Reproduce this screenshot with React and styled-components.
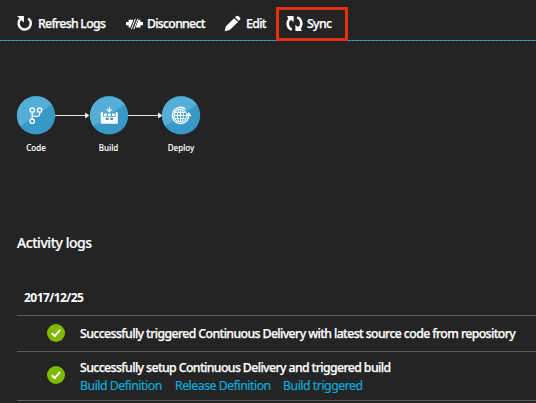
import React from "react";
import styled, { createGlobalStyle } from "styled-components";

const GlobalStyle = createGlobalStyle`
  * { box-sizing: border-box; }
  body { margin: 0; background: #242424; overflow: hidden; }
`;

const Page = styled.main`
  width: 536px;
  height: 403px;
  background: #242424;
  color: #fff;
  font-family: "Noto Sans", "Open Sans", sans-serif;
  font-size: 12.3px;
  overflow: hidden;
`;

const Toolbar = styled.header`
  height: 41px;
  padding: 7px 0 0 16px;
  display: flex;
  align-items: flex-start;
  background: repeating-linear-gradient(90deg, #36a0bd 0 3px, #23738a 3px 4px) 0 40px / 100% 1px no-repeat;
`;

const Command = styled.button`
  display: flex;
  align-items: center;
  flex: none;
  gap: ${(p) => p.$gap || 5}px;
  width: ${(p) => p.$width}px;
  height: 34px;
  padding: 0 0 1px;
  border: 0;
  background: none;
  color: inherit;
  font: inherit;
  font-weight: 500;
  -webkit-text-stroke: 0.25px currentColor;
  white-space: nowrap;
  letter-spacing: ${(p) => p.$track}px;
  svg { flex: none; }
`;

const SyncCommand = styled(Command)`
  border: 3px solid #e3300f;
  border-radius: 1px;
  padding: 0 0 1px 7px;
`;

const Pipeline = styled.section`
  height: 183px;
  padding: 54px 0 0 16px;
  display: flex;
  align-items: flex-start;
`;

const Stage = styled.div`
  width: 40px;
  display: flex;
  flex-direction: column;
  align-items: center;
  flex: none;
`;

const StageName = styled.span`
  margin-top: 7px;
  font-size: 8px;
  font-weight: 500;
  line-height: 12px;
  -webkit-text-stroke: 0.1px currentColor;
`;

const Connector = styled.svg`
  flex: none;
  margin: 15px -1.3px 0 -1px;
`;

const Heading = styled.h1`
  margin: 0 0 0 17px;
  height: 62px;
  line-height: 38px;
  font-size: 14px;
  font-weight: 500;
  letter-spacing: -0.45px;
  -webkit-text-stroke: 0.2px currentColor;
`;

const Logs = styled.section`
  margin-left: 17px;
`;

const LogDate = styled.h2`
  margin: 0;
  height: 29px;
  padding: 3px 0 0 7px;
  font-size: 12px;
  line-height: 18px;
  font-weight: 700;
  letter-spacing: -0.55px;
`;

const LogRow = styled.article`
  height: ${(p) => p.$height}px;
  padding-left: 30px;
  display: flex;
  align-items: center;
  gap: 15px;
  border-top: 1px solid #5b5b5b;
  svg { flex: none; margin-top: -2px; }
`;

const LastRow = styled(LogRow)`
  border-bottom: 1px solid #5b5b5b;
`;

const Details = styled.div`
  padding-top: 2px;
`;

const Message = styled.p`
  margin: 0;
  line-height: 18px;
  font-weight: 500;
  white-space: nowrap;
  letter-spacing: -0.61px;
  -webkit-text-stroke: 0.25px currentColor;
`;

const Links = styled.nav`
  display: flex;
  height: 18px;
`;

const LogLink = styled.a`
  width: ${(p) => p.$width}px;
  flex: none;
  color: #0fabda;
  line-height: 18px;
  white-space: nowrap;
  letter-spacing: -0.48px;
  -webkit-text-stroke: 0.2px currentColor;
`;

const RefreshIcon = () => (
  <svg width="17" height="17" viewBox="0 0 17 17" fill="none">
    <path d="M12.2 3.4A6.1 6.1 0 1 1 3.9 4.6" stroke="#fff" strokeWidth="2.4" />
    <path d="M1.1 1h6.8v6.5L5.4 5.2 3.2 6.6 3.5 3.3z" fill="#fff" />
  </svg>
);

const DisconnectIcon = () => (
  <svg width="17" height="12" viewBox="0 0 17 12">
    <path d="M0 4h2.6V1.8H7.4L4.4 9.4H2.6V7.2H0zM17 4h-2.6V1.8h-1.8L9.6 9.4h4.8V7.2H17z" fill="#fff" />
    <path d="M5.4 11.2 9.4.8M7.8 11.2l4-10.4" stroke="#fff" strokeWidth="1" />
  </svg>
);

const EditIcon = () => (
  <svg width="17" height="17" viewBox="0 0 17 17" fill="#fff">
    <path d="M.6 16.2l1.3-4.9 8.2-8.1 4 3.8-8.4 7.9zM11 2.3l1.4-1.2q1.1-.8 2.1.1L16 2.6q.9 1 0 2L14.9 6z" />
  </svg>
);

const SyncIcon = () => (
  <svg width="17" height="17" viewBox="0 0 17 17" fill="none">
    <path d="M5.8 14.7A6.4 6.4 0 0 1 4.4 3.5M11.2 2.3a6.4 6.4 0 0 1 1.4 11.2" stroke="#fff" strokeWidth="2.5" />
    <path d="M1.2 1h6.4v6.3L5.3 5 3 6.1zM15.8 16H9.4V9.7l2.3 2.2 2.3-1z" fill="#fff" />
  </svg>
);

const StageDisc = ({ children }) => (
  <svg width="40" height="40" viewBox="0 0 40 40">
    <circle cx="20" cy="20.3" r="19.2" fill="#3999c6" />
    <path d="M4.2 31.2A19.2 19.2 0 0 1 35.8 9.4z" fill="#55aed6" />
    {children}
  </svg>
);

const CodeGlyph = () => (
  <g fill="none" stroke="#fff" strokeWidth="1.3">
    <circle cx="16.2" cy="15" r="2.2" />
    <circle cx="23.6" cy="15" r="2.2" />
    <circle cx="16.2" cy="26.2" r="2.2" />
    <path d="M16.2 17.3v6.6M23.6 17.3v2.2q0 1.8-1.8 1.8h-5.6" />
  </g>
);

const BuildGlyph = () => (
  <g>
    <path d="M11.8 17.2H14v4.5h12.6v-4.5h2.2v11.5h-17z" fill="#fff" />
    <path d="M15 18.6h2.8v2.5H15zM19 18.6h2.8v2.5H19zM23 18.6h2.8v2.5H23z" fill="#fff" />
    <path d="M16.8 22.8h2.8v2.3h-2.8zM21.2 22.8H24v2.3h-2.8z" fill="#3999c6" />
    <path d="M20.3 12v4.2M17.8 14.1l2.5 2.5 2.5-2.5" fill="none" stroke="#fff" strokeWidth="1.1" />
  </g>
);

const DeployGlyph = () => (
  <g fill="none" stroke="#fff">
    <g strokeWidth="1">
      <circle cx="19.4" cy="20.5" r="6.4" />
      <ellipse cx="19.4" cy="20.5" rx="3" ry="6.4" />
      <path d="M19.4 14.1v12.8M13 20.5h12.8M14 17.4h10.8M14 23.6h10.8" />
    </g>
    <path d="M24.4 14A8.1 8.1 0 1 0 27.6 20.5" strokeWidth="1.4" />
    <path d="M24.8 21.2 27.8 17l2.8 4.2z" fill="#fff" stroke="none" />
  </g>
);

const Arrow = () => (
  <Connector width="34.8" height="10" viewBox="0 0 34.8 10">
    <path d="M0 5.5h32" stroke="#e5e5e5" />
    <path d="M30.2 2.6v5.8l4-2.9z" fill="#fff" />
  </Connector>
);

const SuccessIcon = () => (
  <svg width="18" height="18" viewBox="0 0 18 18">
    <circle cx="9" cy="9" r="9" fill="#7fba00" />
    <path d="M4.8 9.2 7.7 12l5.4-6.2" fill="none" stroke="#fff" strokeWidth="1.9" />
  </svg>
);

export default function App() {
  return (
    <Page>
      <GlobalStyle />
      <Toolbar>
        <Command $width={110} $track={-0.72}><RefreshIcon />Refresh Logs</Command>
        <Command $width={98} $gap={4} $track={-0.74}><DisconnectIcon />Disconnect</Command>
        <Command $width={52} $track={-0.65}><EditIcon />Edit</Command>
        <SyncCommand $width={72} $gap={4} $track={-0.65}><SyncIcon />Sync</SyncCommand>
      </Toolbar>
      <Pipeline>
        <Stage><StageDisc><CodeGlyph /></StageDisc><StageName>Code</StageName></Stage>
        <Arrow />
        <Stage><StageDisc><BuildGlyph /></StageDisc><StageName>Build</StageName></Stage>
        <Arrow />
        <Stage><StageDisc><DeployGlyph /></StageDisc><StageName>Deploy</StageName></Stage>
      </Pipeline>
      <Heading>Activity logs</Heading>
      <Logs>
        <LogDate>2017/12/25</LogDate>
        <LogRow $height={36}>
          <SuccessIcon />
          <Message>Successfully triggered Continuous Delivery with latest source code from repository</Message>
        </LogRow>
        <LastRow $height={50}>
          <SuccessIcon />
          <Details>
            <Message>Successfully setup Continuous Delivery and triggered build</Message>
            <Links>
              <LogLink $width={95}>Build Definition</LogLink>
              <LogLink $width={108}>Release Definition</LogLink>
              <LogLink $width={90}>Build triggered</LogLink>
            </Links>
          </Details>
        </LastRow>
      </Logs>
    </Page>
  );
}
